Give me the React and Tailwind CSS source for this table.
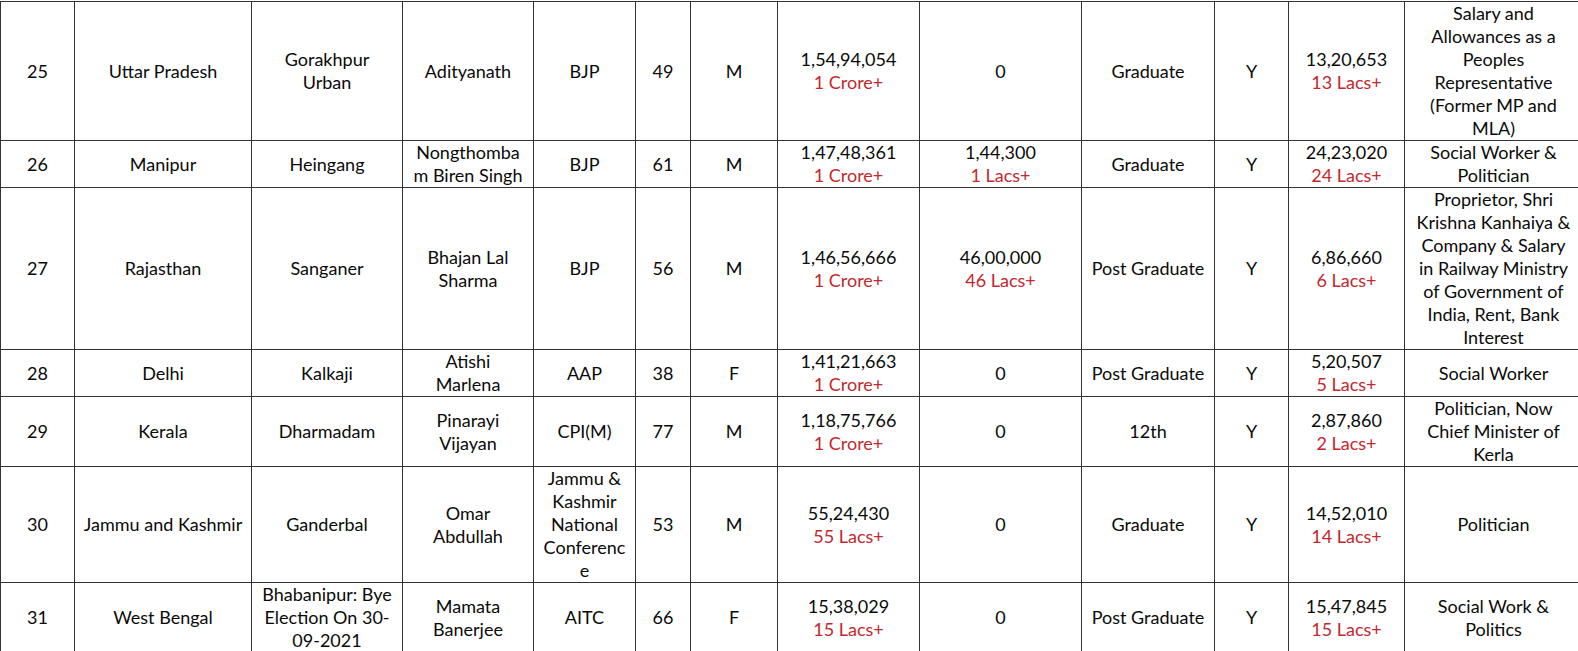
const rows = [
  {
    h: 'h-[138px]',
    cells: [
      ['25'], ['Uttar Pradesh'], ['Gorakhpur', 'Urban'], ['Adityanath'], ['BJP'], ['49'], ['M'],
      ['1,54,94,054', '1 Crore+'], ['0'], ['Graduate'], ['Y'], ['13,20,653', '13 Lacs+'],
      ['Salary and', 'Allowances as a', 'Peoples', 'Representative', '(Former MP and', 'MLA)'],
    ],
  },
  {
    h: 'h-[47px]',
    cells: [
      ['26'], ['Manipur'], ['Heingang'], ['Nongthomba', 'm Biren Singh'], ['BJP'], ['61'], ['M'],
      ['1,47,48,361', '1 Crore+'], ['1,44,300', '1 Lacs+'], ['Graduate'], ['Y'], ['24,23,020', '24 Lacs+'],
      ['Social Worker &', 'Politician'],
    ],
  },
  {
    h: 'h-[162px]',
    cells: [
      ['27'], ['Rajasthan'], ['Sanganer'], ['Bhajan Lal', 'Sharma'], ['BJP'], ['56'], ['M'],
      ['1,46,56,666', '1 Crore+'], ['46,00,000', '46 Lacs+'], ['Post Graduate'], ['Y'], ['6,86,660', '6 Lacs+'],
      ['Proprietor, Shri', 'Krishna Kanhaiya &', 'Company & Salary', 'in Railway Ministry', 'of Government of', 'India, Rent, Bank', 'Interest'],
    ],
  },
  {
    h: 'h-[47px]',
    cells: [
      ['28'], ['Delhi'], ['Kalkaji'], ['Atishi', 'Marlena'], ['AAP'], ['38'], ['F'],
      ['1,41,21,663', '1 Crore+'], ['0'], ['Post Graduate'], ['Y'], ['5,20,507', '5 Lacs+'],
      ['Social Worker'],
    ],
  },
  {
    h: 'h-[69px]',
    cells: [
      ['29'], ['Kerala'], ['Dharmadam'], ['Pinarayi', 'Vijayan'], ['CPI(M)'], ['77'], ['M'],
      ['1,18,75,766', '1 Crore+'], ['0'], ['12th'], ['Y'], ['2,87,860', '2 Lacs+'],
      ['Politician, Now', 'Chief Minister of', 'Kerla'],
    ],
  },
  {
    h: 'h-[115px]',
    cells: [
      ['30'], ['Jammu and Kashmir'], ['Ganderbal'], ['Omar', 'Abdullah'], ['Jammu &', 'Kashmir', 'National', 'Conferenc', 'e'], ['53'], ['M'],
      ['55,24,430', '55 Lacs+'], ['0'], ['Graduate'], ['Y'], ['14,52,010', '14 Lacs+'],
      ['Politician'],
    ],
  },
  {
    h: 'h-[70px]',
    cells: [
      ['31'], ['West Bengal'], ['Bhabanipur: Bye', 'Election On 30-', '09-2021'], ['Mamata', 'Banerjee'], ['AITC'], ['66'], ['F'],
      ['15,38,029', '15 Lacs+'], ['0'], ['Post Graduate'], ['Y'], ['15,47,845', '15 Lacs+'],
      ['Social Work &', 'Politics'],
    ],
  },
];

// money columns: second line is the rounded figure in red
const moneyCols = [7, 8, 11];

const Cell = ({ lines, col }) => {
  const isMoney = moneyCols.includes(col) && lines.length === 2;
  return (
    <td className="border border-[#333] p-0 text-center align-middle">
      {lines.map((line, i) => (
        <span
          key={i}
          className={`block whitespace-nowrap ${isMoney && i === 1 ? 'text-[#c3282e]' : 'text-[#0a0a0a]'}`}
        >
          {line}
        </span>
      ))}
    </td>
  );
};

const App = () => {
  return (
    <div className="h-[651px] overflow-hidden bg-white pt-px">
      <table
        className="w-[1582px] min-w-[1582px] max-w-none table-fixed border-collapse text-[18px] leading-[23px]"
        style={{ fontFamily: 'Lato, "Open Sans", sans-serif' }}
      >
        <colgroup>
          <col className="w-[74px]" />
          <col className="w-[177px]" />
          <col className="w-[151px]" />
          <col className="w-[131px]" />
          <col className="w-[102px]" />
          <col className="w-[55px]" />
          <col className="w-[87px]" />
          <col className="w-[142px]" />
          <col className="w-[162px]" />
          <col className="w-[133px]" />
          <col className="w-[74px]" />
          <col className="w-[116px]" />
          <col className="w-[178px]" />
        </colgroup>
        <tbody>
          {rows.map((row, r) => (
            <tr key={r} className={row.h}>
              {row.cells.map((lines, c) => (
                <Cell key={c} lines={lines} col={c} />
              ))}
            </tr>
          ))}
        </tbody>
      </table>
    </div>
  );
};

export default App;
